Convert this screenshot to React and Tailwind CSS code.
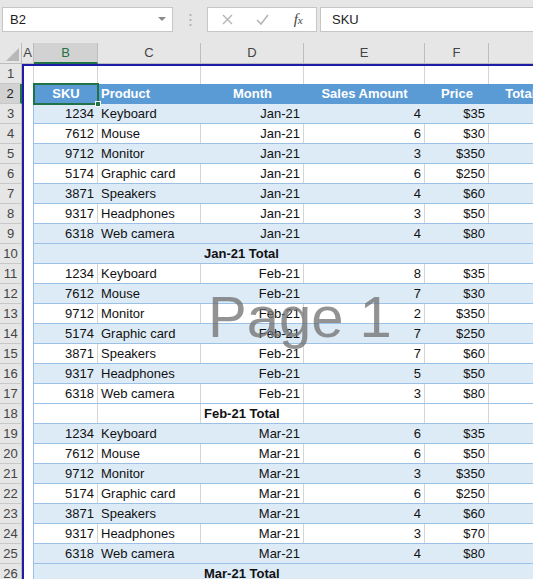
import React from 'react';

const jan = [
  ['1234', 'Keyboard', 'Jan-21', '4', '$35'],
  ['7612', 'Mouse', 'Jan-21', '6', '$30'],
  ['9712', 'Monitor', 'Jan-21', '3', '$350'],
  ['5174', 'Graphic card', 'Jan-21', '6', '$250'],
  ['3871', 'Speakers', 'Jan-21', '4', '$60'],
  ['9317', 'Headphones', 'Jan-21', '3', '$50'],
  ['6318', 'Web camera', 'Jan-21', '4', '$80'],
];
const feb = [
  ['1234', 'Keyboard', 'Feb-21', '8', '$35'],
  ['7612', 'Mouse', 'Feb-21', '7', '$30'],
  ['9712', 'Monitor', 'Feb-21', '2', '$350'],
  ['5174', 'Graphic card', 'Feb-21', '7', '$250'],
  ['3871', 'Speakers', 'Feb-21', '7', '$60'],
  ['9317', 'Headphones', 'Feb-21', '5', '$50'],
  ['6318', 'Web camera', 'Feb-21', '3', '$80'],
];
const mar = [
  ['1234', 'Keyboard', 'Mar-21', '6', '$35'],
  ['7612', 'Mouse', 'Mar-21', '6', '$50'],
  ['9712', 'Monitor', 'Mar-21', '3', '$350'],
  ['5174', 'Graphic card', 'Mar-21', '6', '$250'],
  ['3871', 'Speakers', 'Mar-21', '4', '$60'],
  ['9317', 'Headphones', 'Mar-21', '3', '$70'],
  ['6318', 'Web camera', 'Mar-21', '4', '$80'],
];

// sheet rows 3..26, banding copied from the sheet
const body = [
  ...jan.map((d, i) => ({ type: 'data', d, blue: i % 2 === 0 })),
  { type: 'total', label: 'Jan-21 Total', blue: true },
  ...feb.map((d, i) => ({ type: 'data', d, blue: i % 2 === 1 })),
  { type: 'total', label: 'Feb-21 Total', blue: false },
  ...mar.map((d, i) => ({ type: 'data', d, blue: i % 2 === 0 })),
  { type: 'total', label: 'Mar-21 Total', blue: true },
];

const cols = ['w-[64px]', 'w-[103px]', 'w-[103px]', 'w-[121px]', 'w-[64px]', 'w-[100px]'];

const RowHead = ({ n, active }) => (
  <div
    className={`h-[20px] flex items-center justify-center border-b border-[#c8c8c8] text-[13px] ${
      active
        ? 'bg-[#d2d2d2] border-r-2 border-r-[#217346] text-[#222]'
        : 'bg-[#e6e6e6] border-r border-r-[#bdbdbd] text-[#444]'
    }`}
  >
    {n}
  </div>
);

const Cell = ({ w, blue, align = 'left', bold, last, children }) => (
  <div
    className={`${w} shrink-0 h-full flex items-center overflow-hidden whitespace-nowrap ${
      align === 'right' ? 'justify-end pr-[3px]' : align === 'center' ? 'justify-center' : 'pl-[3px]'
    } ${bold ? 'font-bold' : ''} ${
      last ? '' : blue ? 'border-r border-[#ddebf7]' : 'border-r border-[#d4d4d4]'
    }`}
  >
    {children}
  </div>
);

const DataRow = ({ row }) => {
  const { blue } = row;
  const bg = blue ? 'bg-[#ddebf7]' : 'bg-white';
  const d = row.d || [];
  return (
    <div className="flex h-[20px]">
      <div className="w-[10px] shrink-0 h-full bg-white border-r border-[#9bc2e6]" />
      <div className={`flex h-full border-b border-[#9bc2e6] ${bg} text-[13px] text-[#111]`}>
        <Cell w={cols[0]} blue={blue} align="right">{d[0]}</Cell>
        <Cell w={cols[1]} blue={blue}>{d[1]}</Cell>
        {row.type === 'total' ? (
          <Cell w={cols[2]} blue={blue} bold>{row.label}</Cell>
        ) : (
          <Cell w={cols[2]} blue={blue} align="right">{d[2]}</Cell>
        )}
        <Cell w={cols[3]} blue={blue} align="right">{d[3]}</Cell>
        <Cell w={cols[4]} blue={blue} align="right">{d[4]}</Cell>
        <Cell w={cols[5]} blue={blue} last />
      </div>
    </div>
  );
};

export default function App() {
  return (
    <div className="relative w-[533px] h-[579px] overflow-hidden bg-white font-['Liberation_Sans',Arial,sans-serif] text-[13px]">
      {/* formula bar */}
      <div className="h-[43px] bg-[#e6e6e6] flex items-start pt-[7px]">
        <div className="ml-[2px] w-[171px] h-[25px] bg-white border border-[#c6c6c6] flex items-center justify-between pl-[7px] pr-[6px] text-[#222]">
          <span>B2</span>
          <svg width="8" height="5" viewBox="0 0 8 5">
            <path d="M0 0h8L4 4z" fill="#8a8a8a" />
          </svg>
        </div>
        <div className="w-[34px] h-[25px] flex items-center justify-center">
          <svg width="3" height="12" viewBox="0 0 3 12">
            <rect x="0.5" y="0" width="2" height="2" fill="#b5b5b5" />
            <rect x="0.5" y="5" width="2" height="2" fill="#b5b5b5" />
            <rect x="0.5" y="10" width="2" height="2" fill="#b5b5b5" />
          </svg>
        </div>
        <div className="w-[110px] h-[25px] bg-white border border-[#c6c6c6] flex items-center">
          <div className="w-[37px] flex justify-center pl-[2px]">
            <svg width="11" height="11" viewBox="0 0 11 11">
              <path d="M1 1l9 9M10 1l-9 9" stroke="#b4b4b4" strokeWidth="1.4" />
            </svg>
          </div>
          <div className="w-[36px] flex justify-center">
            <svg width="13" height="11" viewBox="0 0 13 11">
              <path d="M1 6l4 4 7-9" stroke="#b4b4b4" strokeWidth="1.6" fill="none" />
            </svg>
          </div>
          <div className="w-[36px] flex justify-center font-['Liberation_Serif',serif] italic text-[15px] text-[#444] leading-none">
            f<span className="text-[11px] mt-[3px]">x</span>
          </div>
        </div>
        <div className="ml-[3px] flex-1 h-[25px] bg-white border border-r-0 border-[#c6c6c6] flex items-center pl-[11px] text-[#222]">
          SKU
        </div>
      </div>

      {/* column headers */}
      <div className="flex h-[21px] bg-[#e6e6e6] text-[#444] text-[13px]">
        <div className="w-[22px] shrink-0 h-full border-r border-b border-[#bdbdbd] flex items-end justify-end pr-[2px] pb-[2px]">
          <svg width="13" height="13" viewBox="0 0 13 13">
            <path d="M13 0V13H0z" fill="#b8b8b8" />
          </svg>
        </div>
        <div className="w-[12px] shrink-0 h-full border-r border-b border-[#bdbdbd] flex items-center justify-center">A</div>
        <div className="w-[64px] shrink-0 h-full bg-[#d2d2d2] border-r border-r-[#bdbdbd] border-b-2 border-b-[#217346] flex items-center justify-center text-[#217346]">B</div>
        {['C', 'D', 'E', 'F', 'G'].map((c, i) => (
          <div key={c} className={`${cols[i + 1]} shrink-0 h-full border-r border-b border-[#bdbdbd] flex items-center justify-center`}>
            {c === 'G' ? '' : c}
          </div>
        ))}
      </div>

      {/* grid */}
      <div className="flex">
        <div className="w-[22px] shrink-0">
          {Array.from({ length: 26 }, (_, i) => (
            <RowHead key={i} n={i + 1} active={i === 1} />
          ))}
        </div>
        <div className="flex-1 border-l-2 border-t-2 border-[#1c1ca8]">
          {/* row 1 */}
          <div className="flex h-[18px]">
            <div className="w-[10px] shrink-0 h-full border-r border-[#d4d4d4]" />
            {cols.map((w, i) => (
              <div key={i} className={`${w} shrink-0 h-full ${i < 5 ? 'border-r border-[#d4d4d4]' : ''}`} />
            ))}
          </div>
          {/* row 2: table header */}
          <div className="flex h-[20px]">
            <div className="w-[10px] shrink-0 h-full bg-white" />
            <div className="flex h-full bg-[#5b9bd5] text-white font-bold text-[13px]">
              <div className="relative w-[64px] shrink-0 h-full flex items-center justify-center">
                SKU
                <div className="absolute -left-[1px] -top-[1px] w-[66px] h-[22px] border-2 border-[#217346]" />
                <div className="absolute -right-[3px] -bottom-[3px] w-[6px] h-[6px] bg-[#217346] border border-white" />
              </div>
              <div className="w-[103px] shrink-0 h-full flex items-center pl-[3px]">Product</div>
              <div className="w-[103px] shrink-0 h-full flex items-center justify-center">Month</div>
              <div className="w-[121px] shrink-0 h-full flex items-center justify-center">Sales Amount</div>
              <div className="w-[64px] shrink-0 h-full flex items-center justify-center">Price</div>
              <div className="w-[100px] shrink-0 h-full flex items-center justify-center whitespace-nowrap">Total Sales</div>
            </div>
          </div>
          {body.map((row, i) => (
            <DataRow key={i} row={row} />
          ))}
        </div>
      </div>

      {/* page watermark */}
      <div className="absolute left-[208px] top-[288px] text-[58px] leading-none text-[#6f6f6f]/75 pointer-events-none whitespace-nowrap">
        Page 1
      </div>
    </div>
  );
}
